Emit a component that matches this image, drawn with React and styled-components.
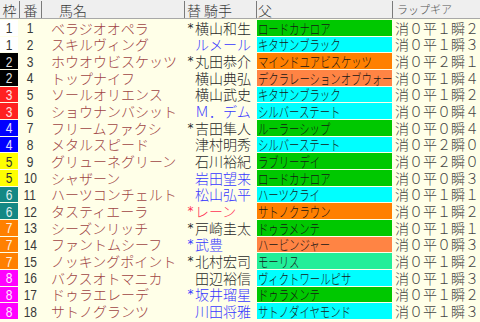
import React from "react";
import styled, { createGlobalStyle } from "styled-components";

const GlobalStyle = createGlobalStyle`
  html, body {
    margin: 0;
    padding: 0;
    background: #ffffe8;
  }
  body {
    font-family: "Noto Sans CJK JP", "Noto Sans", sans-serif;
    font-weight: 300;
  }
`;

const COLS = "18px 22px 142px 71px 135px 1fr";

const FRAME = {
  1: { bg: "#ffffff", fg: "#333" },
  2: { bg: "#000000", fg: "#e0e0e0" },
  3: { bg: "#ff2020", fg: "#ffe0e0" },
  4: { bg: "#0000ff", fg: "#e0e0ff" },
  5: { bg: "#ffff00", fg: "#333" },
  6: { bg: "#148884", fg: "#e0f0f0" },
  7: { bg: "#ff8000", fg: "#fff0e0" },
  8: { bg: "#ff00ff", fg: "#ffe8ff" },
};

const SIRE = {
  green: "#00c800",
  cyan: "#00ffff",
  orange: "#ff8000",
  salmon: "#ff8444",
  mint: "#22ee99",
};

const JOCKEY = {
  black: "#2a2a2a",
  blue: "#3838ff",
  red: "#ff3355",
};

const horses = [
  { waku: 1, no: 1, name: "ベラジオオペラ", change: true, jockey: "横山和生", jc: "black", sire: "ロードカナロア", sc: "green", gear: "消０平１瞬２" },
  { waku: 1, no: 2, name: "スキルヴィング", change: false, jockey: "ルメール", jc: "blue", sire: "キタサンブラック", sc: "cyan", gear: "消０平１瞬３" },
  { waku: 2, no: 3, name: "ホウオウビスケッツ", change: true, jockey: "丸田恭介", jc: "black", sire: "マインドユアビスケッツ", sc: "orange", gear: "消０平２瞬１" },
  { waku: 2, no: 4, name: "トップナイフ", change: false, jockey: "横山典弘", jc: "black", sire: "デクラレーションオブウォー", sc: "salmon", gear: "消０平１瞬４" },
  { waku: 3, no: 5, name: "ソールオリエンス", change: false, jockey: "横山武史", jc: "black", sire: "キタサンブラック", sc: "cyan", gear: "消０平１瞬２" },
  { waku: 3, no: 6, name: "ショウナンバシット", change: false, jockey: "Ｍ．デム", jc: "blue", sire: "シルバーステート", sc: "cyan", gear: "消０平０瞬４" },
  { waku: 4, no: 7, name: "フリームファクシ", change: true, jockey: "吉田隼人", jc: "black", sire: "ルーラーシップ", sc: "green", gear: "消０平０瞬４" },
  { waku: 4, no: 8, name: "メタルスピード", change: false, jockey: "津村明秀", jc: "black", sire: "シルバーステート", sc: "cyan", gear: "消０平２瞬０" },
  { waku: 5, no: 9, name: "グリューネグリーン", change: false, jockey: "石川裕紀", jc: "black", sire: "ラブリーデイ", sc: "green", gear: "消０平２瞬０" },
  { waku: 5, no: 10, name: "シャザーン", change: false, jockey: "岩田望来", jc: "blue", sire: "ロードカナロア", sc: "green", gear: "消０平０瞬３" },
  { waku: 6, no: 11, name: "ハーツコンチェルト", change: false, jockey: "松山弘平", jc: "blue", sire: "ハーツクライ", sc: "cyan", gear: "消０平１瞬１" },
  { waku: 6, no: 12, name: "タスティエーラ", change: true, jockey: "レーン", jc: "red", sire: "サトノクラウン", sc: "orange", gear: "消０平１瞬２" },
  { waku: 7, no: 13, name: "シーズンリッチ", change: true, jockey: "戸崎圭太", jc: "black", sire: "ドゥラメンテ", sc: "green", gear: "消０平１瞬１" },
  { waku: 7, no: 14, name: "ファントムシーフ", change: true, jockey: "武豊", jc: "blue", sire: "ハービンジャー", sc: "salmon", gear: "消０平０瞬３" },
  { waku: 7, no: 15, name: "ノッキングポイント", change: true, jockey: "北村宏司", jc: "black", sire: "モーリス", sc: "mint", gear: "消０平１瞬２" },
  { waku: 8, no: 16, name: "バクスオトマニカ", change: false, jockey: "田辺裕信", jc: "black", sire: "ヴィクトワールピサ", sc: "cyan", gear: "消０平１瞬３" },
  { waku: 8, no: 17, name: "ドゥラエレーデ", change: true, jockey: "坂井瑠星", jc: "blue", sire: "ドゥラメンテ", sc: "green", gear: "消０平１瞬２" },
  { waku: 8, no: 18, name: "サトノグランツ", change: false, jockey: "川田将雅", jc: "blue", sire: "サトノダイヤモンド", sc: "cyan", gear: "消０平１瞬３" },
];

const Page = styled.div`
  width: 480px;
  height: 322px;
  overflow: hidden;
  background: #ffffe8;
  display: flex;
  flex-direction: column;
`;

const Header = styled.div`
  display: grid;
  grid-template-columns: 19px 22px 143px 72px 136px 1fr;
  height: 19px;
  padding-top: 1px;
  box-sizing: border-box;
  background: #efefef;
  border-bottom: 1px solid #a8a8a8;
  flex-shrink: 0;
`;

const HeadCell = styled.div`
  display: flex;
  align-items: center;
  justify-content: ${(p) => (p.$center ? "center" : "flex-start")};
  padding-left: ${(p) => p.$pad || 0}px;
  border-left: ${(p) => (p.$first ? "none" : "1px solid #7a7a7a")};
  font-size: ${(p) => p.$size || 14}px;
  color: ${(p) => p.$color || "#383838"};
  line-height: 1;
  white-space: nowrap;
`;

const Body = styled.div`
  display: grid;
  grid-template-rows: repeat(18, 1fr);
  row-gap: 1px;
  height: 299px;
  margin-top: 1px;
  flex-shrink: 0;
`;

const Row = styled.div`
  display: grid;
  grid-template-columns: ${COLS};
  column-gap: 1px;
  min-height: 0;
`;

const Cell = styled.div`
  display: flex;
  align-items: center;
  min-width: 0;
  white-space: nowrap;
  line-height: 1;
`;

const Waku = styled(Cell)`
  justify-content: center;
  background: ${(p) => FRAME[p.$waku].bg};
  color: ${(p) => FRAME[p.$waku].fg};
  font-family: "Liberation Sans", "Noto Sans", sans-serif;
  font-size: 15px;
`;

const Digits = styled.span`
  display: inline-block;
  transform: scaleX(0.8);
`;

const Num = styled(Cell)`
  justify-content: center;
  color: #3a3a3a;
  font-family: "Liberation Sans", "Noto Sans", sans-serif;
  font-size: 15px;
`;

const Name = styled(Cell)`
  padding-left: 9px;
  color: #a04444;
  font-size: 14px;
`;

const Jockey = styled(Cell)`
  padding-left: 1px;
  color: ${(p) => JOCKEY[p.$tone]};
  font-size: 14px;
`;

const Mark = styled.span`
  display: inline-block;
  width: 9px;
  font-family: "DejaVu Sans", sans-serif;
  font-weight: 400;
  font-size: 12px;
  text-align: center;
`;

const Sire = styled(Cell)`
  background: ${(p) => SIRE[p.$tone]};
  padding-left: 1px;
`;

const SireText = styled.span`
  display: inline-block;
  font-size: 14px;
  color: #151515;
  transform: scaleX(0.74);
  transform-origin: left center;
`;

const Gear = styled(Cell)`
  padding-left: 2px;
  color: #444;
  font-size: 14px;
`;

const App = () => (
  <Page>
    <GlobalStyle />
    <Header>
      <HeadCell $first $center>枠</HeadCell>
      <HeadCell $center>番</HeadCell>
      <HeadCell $pad={17}>馬名</HeadCell>
      <HeadCell $pad={2}>替 騎手</HeadCell>
      <HeadCell $pad={1}>父</HeadCell>
      <HeadCell $pad={4} $size={11} $color="#555">ラップギア</HeadCell>
    </Header>
    <Body>
      {horses.map((h) => (
        <Row key={h.no}>
          <Waku $waku={h.waku}>
            <Digits>{h.waku}</Digits>
          </Waku>
          <Num>
            <Digits>{h.no}</Digits>
          </Num>
          <Name>{h.name}</Name>
          <Jockey $tone={h.jc}>
            <Mark>{h.change ? "*" : ""}</Mark>
            {h.jockey}
          </Jockey>
          <Sire $tone={h.sc}>
            <SireText>{h.sire}</SireText>
          </Sire>
          <Gear>{h.gear}</Gear>
        </Row>
      ))}
    </Body>
  </Page>
);

export default App;
